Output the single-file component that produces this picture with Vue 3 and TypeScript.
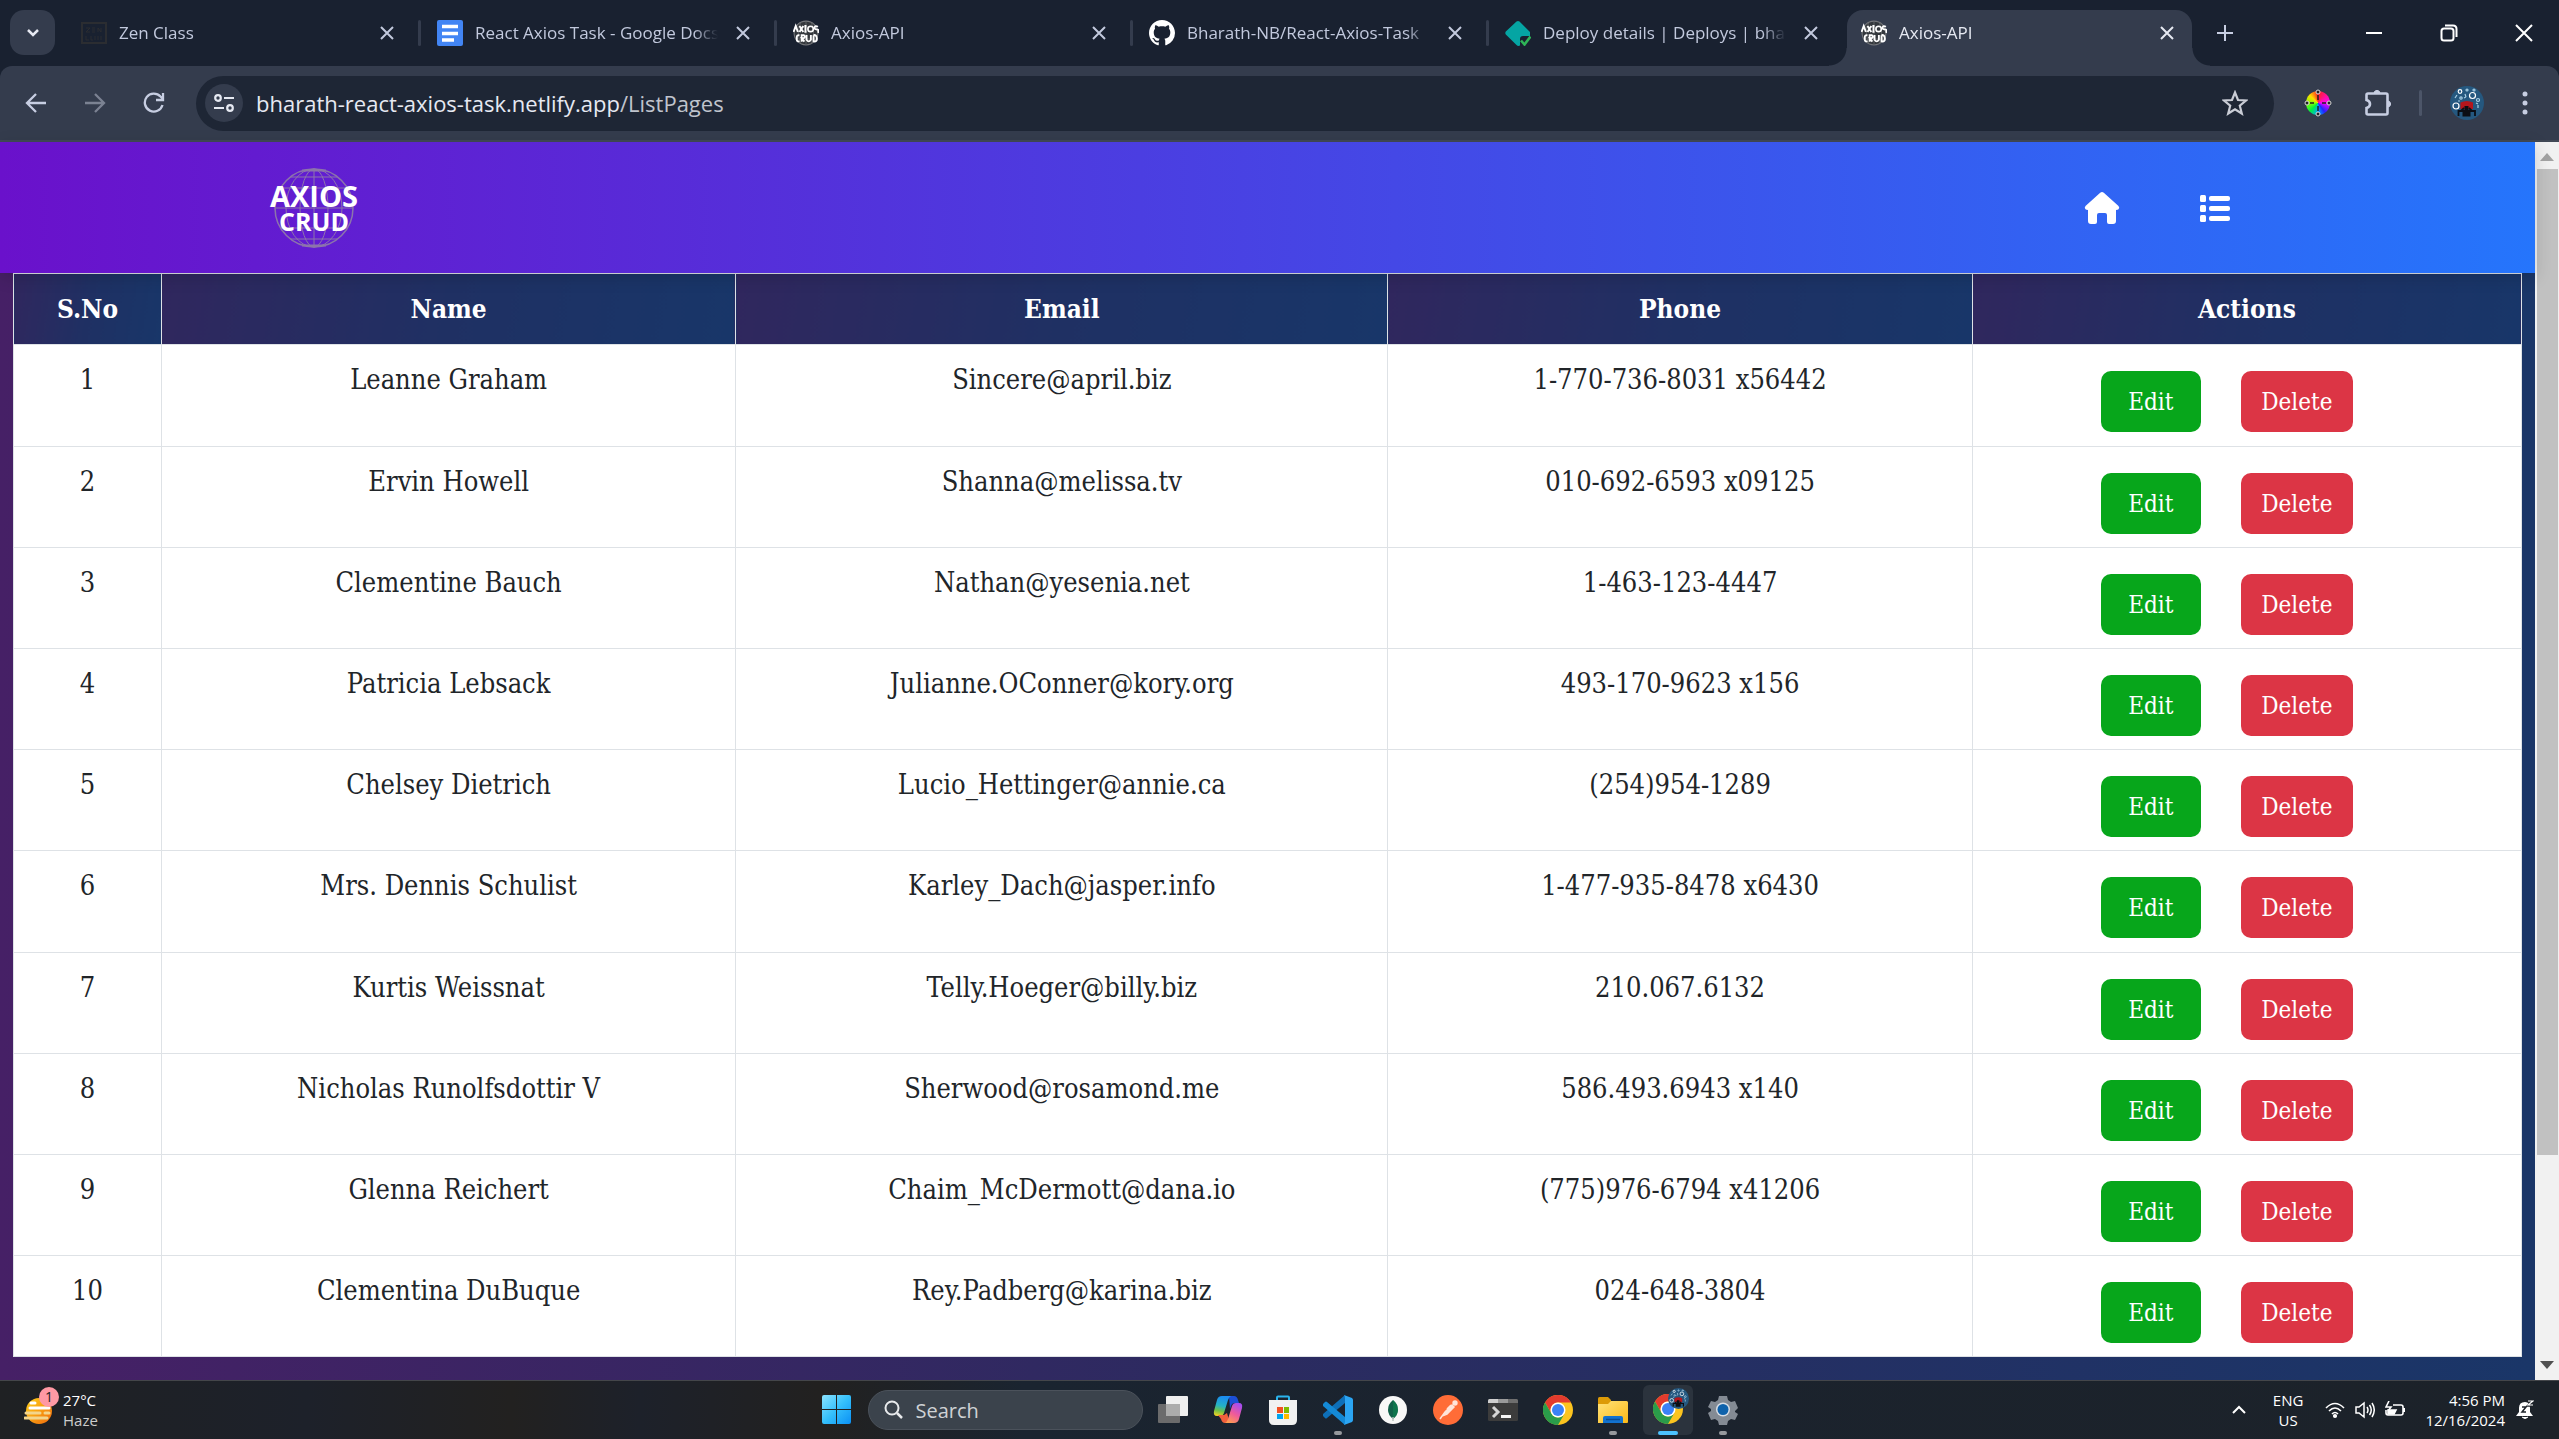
<script setup lang="ts">
interface Tab {
  title: string
  icon: string
  active?: boolean
}
interface User {
  id: number
  name: string
  email: string
  phone: string
}
interface TaskApp {
  label: string
  icon: string
  state?: 'running' | 'focused'
}

const tabs: Tab[] = [
  { title: 'Zen Class', icon: 'zen' },
  { title: 'React Axios Task - Google Docs', icon: 'docs' },
  { title: 'Axios-API', icon: 'axios' },
  { title: 'Bharath-NB/React-Axios-Task', icon: 'github' },
  { title: 'Deploy details | Deploys | bharath', icon: 'deploy' },
  { title: 'Axios-API', icon: 'axios', active: true },
]

const users: User[] = [
  { id: 1, name: 'Leanne Graham', email: 'Sincere@april.biz', phone: '1-770-736-8031 x56442' },
  { id: 2, name: 'Ervin Howell', email: 'Shanna@melissa.tv', phone: '010-692-6593 x09125' },
  { id: 3, name: 'Clementine Bauch', email: 'Nathan@yesenia.net', phone: '1-463-123-4447' },
  { id: 4, name: 'Patricia Lebsack', email: 'Julianne.OConner@kory.org', phone: '493-170-9623 x156' },
  { id: 5, name: 'Chelsey Dietrich', email: 'Lucio_Hettinger@annie.ca', phone: '(254)954-1289' },
  { id: 6, name: 'Mrs. Dennis Schulist', email: 'Karley_Dach@jasper.info', phone: '1-477-935-8478 x6430' },
  { id: 7, name: 'Kurtis Weissnat', email: 'Telly.Hoeger@billy.biz', phone: '210.067.6132' },
  { id: 8, name: 'Nicholas Runolfsdottir V', email: 'Sherwood@rosamond.me', phone: '586.493.6943 x140' },
  { id: 9, name: 'Glenna Reichert', email: 'Chaim_McDermott@dana.io', phone: '(775)976-6794 x41206' },
  { id: 10, name: 'Clementina DuBuque', email: 'Rey.Padberg@karina.biz', phone: '024-648-3804' },
]

const apps: TaskApp[] = [
  { label: 'Task View', icon: 'taskview' },
  { label: 'Copilot', icon: 'copilot' },
  { label: 'Microsoft Store', icon: 'store' },
  { label: 'Visual Studio Code', icon: 'vscode', state: 'running' },
  { label: 'MongoDB Compass', icon: 'mongo' },
  { label: 'Postman', icon: 'postman' },
  { label: 'Terminal', icon: 'terminal' },
  { label: 'Google Chrome', icon: 'chrome' },
  { label: 'File Explorer', icon: 'explorer', state: 'running' },
  { label: 'Google Chrome, profile', icon: 'chrome-profile', state: 'focused' },
  { label: 'Settings', icon: 'settings', state: 'running' },
]
</script>

<template>
  <div class="screen">
    <svg class="defs" aria-hidden="true">
      <defs>
        <linearGradient id="g-win" x1="0" y1="0" x2="1" y2="1">
          <stop offset="0" stop-color="#8be3ff" /><stop offset="0.5" stop-color="#35c0fb" /><stop offset="1" stop-color="#0a90f5" />
        </linearGradient>
        <linearGradient id="g-cop1" x1="0.3" y1="0" x2="0.1" y2="1">
          <stop offset="0" stop-color="#1b8df0" /><stop offset="0.45" stop-color="#25b3c4" /><stop offset="0.7" stop-color="#6cc04a" /><stop offset="1" stop-color="#ffd21f" />
        </linearGradient>
        <linearGradient id="g-cop2" x1="0.7" y1="0" x2="0.2" y2="1">
          <stop offset="0" stop-color="#a54df0" /><stop offset="0.5" stop-color="#ef5a9b" /><stop offset="1" stop-color="#ffa04d" />
        </linearGradient>
        <linearGradient id="g-sun" x1="0" y1="0" x2="1" y2="1">
          <stop offset="0" stop-color="#ffd21a" /><stop offset="1" stop-color="#f0690c" />
        </linearGradient>
        <linearGradient id="g-folder" x1="0" y1="0" x2="1" y2="1">
          <stop offset="0" stop-color="#ffe27a" /><stop offset="1" stop-color="#fbb917" />
        </linearGradient>
        <symbol id="zen" viewBox="0 0 26 26">
          <rect x="1" y="3" width="24" height="20" fill="none" stroke="#2b2d31" stroke-width="2" />
          <path d="M5 8h4l-4 4h4M11 8h3M11 10h3M11 12h3M17 12v-4l3 4v-4M5 16v4h3M10 16v4h2M14 16v4M17 16v4M20 16v4" fill="none" stroke="#2b2d31" />
        </symbol>
        <symbol id="docs" viewBox="0 0 26 26">
          <rect width="26" height="26" rx="2" fill="#4285f4" />
          <path d="M5 6.500h16M5 13.500h16M5 20h12" stroke="#fff" stroke-width="3.400" />
        </symbol>
        <symbol id="axios" viewBox="0 0 96 96">
          <circle cx="48" cy="48" r="44" fill="#33373c" stroke="#74767a" stroke-width="4" />
          <path d="M48 4v88M10 26h76M10 70h76M28 10q-16 38 0 76M68 10q16 38 0 76" stroke="#64676b" stroke-width="3" fill="none" />
          <path d="M2 44L10 22l8 22M24 22l14 22M38 22L24 44M46 22v22M42 22h8M42 44h8M92 25q-10-6-12 2t8 8 4 12M24 57q-10-3-10 7v8q0 9 10 6M32 80V56h8q6 6 0 11h-8l10 13M50 55v18q8 12 16 0V55M76 56v23q14 2 12-12t-12-11" stroke="#fff" stroke-width="7" fill="none" />
          <circle cx="65" cy="33" r="10" stroke="#fff" stroke-width="6" fill="none" />
        </symbol>
        <symbol id="github" viewBox="0 0 16 16">
          <path fill="#fff" d="M8 0C3.580 0 0 3.580 0 8c0 3.540 2.290 6.530 5.470 7.590.4.070.55-.17.55-.38 0-.19-.01-.82-.01-1.490-2.010.37-2.530-.49-2.690-.94-.09-.23-.48-.94-.82-1.130-.28-.15-.68-.52-.01-.53.63-.01 1.080.58 1.230.82.72 1.210 1.870.87 2.330.66.07-.52.28-.87.51-1.070-1.780-.2-3.640-.89-3.640-3.950 0-.87.31-1.590.82-2.150-.08-.2-.36-1.020.08-2.120 0 0 .67-.21 2.200.82.64-.18 1.320-.27 2-.27s1.360.09 2 .27c1.530-1.040 2.200-.82 2.200-.82.44 1.100.16 1.920.08 2.120.51.56.82 1.270.82 2.150 0 3.070-1.870 3.750-3.650 3.950.29.25.54.73.54 1.480 0 1.070-.01 1.930-.01 2.200 0 .21.15.46.55.38A8.010 8.010 0 0 0 16 8c0-4.420-3.580-8-8-8z" />
        </symbol>
        <symbol id="deploy" viewBox="0 0 26 26">
          <path d="M11.500 1.500q1.500-1 3 0L25 12v4h-7q-3 0-3 3v6.500q-2 1-3.500-.5L.8 14.500q-1-1.500 0-3z" fill="#05a5a3" />
          <path d="M16 20.500l3.500 4 6-8" fill="none" stroke="#2fb457" stroke-width="2.600" />
        </symbol>
        <symbol id="avatar" viewBox="0 0 34 34">
          <circle cx="17" cy="17" r="17" fill="#25587f" />
          <g fill="none" stroke="#a9d0e6" stroke-width="1.200">
            <circle cx="10" cy="5.500" r="1.800" stroke="#fff" /><circle cx="22.500" cy="9.500" r="3" stroke="#fff" /><circle cx="6" cy="20" r="3" stroke="#fff" /><circle cx="17" cy="4" r="1" /><circle cx="28" cy="14" r="1.500" /><circle cx="11" cy="12" r="1.200" /><circle cx="24" cy="4" r="1" /><path d="M5 12l2-3M15 8l1 3M28 22v-3M14 12l2-1M26 17l2 1M8 15h2" />
          </g>
          <path d="M10.500 16.500q6.500-3 12.500 0v6.500H10.500z" fill="#b3161d" />
          <path d="M14.500 20h4v4l2 1.500v5h-8v-5l2-1.500z" fill="#0b0e14" />
          <path d="M8.500 30v-5H25v5M11 25l3-3M22 25l-3-3" fill="none" stroke="#0b0e14" stroke-width="1.800" />
        </symbol>
        <symbol id="taskview" viewBox="0 0 30 30">
          <rect x="8" y="1" width="22" height="20" rx="1" fill="#efefef" />
          <rect x="0" y="9" width="22" height="19" rx="1" fill="#6b6b6c" />
          <rect x="8" y="9" width="14" height="12" fill="#acacac" />
        </symbol>
        <symbol id="copilot" viewBox="0 0 30 30">
          <path d="M16 1h5q3 0 4 4l1 3h-4q-3 0-4 3l-1 3z" fill="#1c4fd6" />
          <path d="M9 1h9q-2 1-3 4l-4 13q-1 3-4 3H4q-4 0-3-5L4 5q1-4 5-4z" fill="url(#g-cop1)" />
          <path d="M5 20h6l3-2 2 7q0 3-2 3h-2q-3 0-4-4z" fill="#f0603c" />
          <path d="M21 28h-9q2-1 3-4l4-13q1-3 4-3h3q4 0 3 5l-3 11q-1 4-5 4z" fill="url(#g-cop2)" />
        </symbol>
        <symbol id="store" viewBox="0 0 30 30">
          <path d="M9 6V2.500q0-1 1-1h10q1 0 1 1V6" fill="none" stroke="#2ab4ee" stroke-width="2" />
          <path d="M1 5h28v20q0 5-5 5H6q-5 0-5-5z" fill="#f1f1f1" />
          <path d="M9 12h6v6H9z" fill="#f25022" /><path d="M16 12h5v6h-5z" fill="#7fba00" /><path d="M9 19h6v5H9z" fill="#00a4ef" /><path d="M16 19h5v5h-5z" fill="#ffb900" />
        </symbol>
        <symbol id="vscode" viewBox="0 0 30 30">
          <path d="M22 0v8L4 23q-1 1-2 0l-2-2q-1-1 0-2z" fill="#0e6fb8" />
          <path d="M22 30v-8L4 7Q3 6 2 7L0 9q-1 1 0 2z" fill="#1489d6" />
          <path d="M21 0l8 3q1 1 1 2v20q0 1-1 2l-8 3q1-1 1-3V3q0-2-1-3z" fill="#2ba5f3" />
        </symbol>
        <symbol id="mongo" viewBox="0 0 30 30">
          <circle cx="15" cy="15" r="14" fill="#f8f8f7" />
          <path d="M15 5q5 4 5 10 0 5-5 9-5-4-5-9 0-6 5-10z" fill="#116149" /><path d="M15 5q5 4 5 10 0 5-5 9z" fill="#0b8a4f" opacity="0.500" /><path d="M15 22v4" stroke="#b8c4be" stroke-width="1.500" />
        </symbol>
        <symbol id="postman" viewBox="0 0 30 30">
          <circle cx="15" cy="15" r="15" fill="#ff6c37" />
          <path d="M7 24l5-7 7-7 2 2-7 7-5 2zM14 14l4-4" fill="#ffe3d8" stroke="#ffe3d8" stroke-width="1.500" /><circle cx="22" cy="8" r="2.700" fill="#ffe3d8" />
        </symbol>
        <symbol id="terminal" viewBox="0 0 30 30">
          <rect y="4" width="30" height="22" rx="1.500" fill="#3c3c3c" /><path d="M0 8V5.500Q0 4 1.500 4H10v4z" fill="#cfcfcf" /><path d="M10 4h10v4H10z" fill="#9a9a9a" /><path d="M20 4h8.500Q30 4 30 5.500V8H20z" fill="#6e6e6e" />
          <path d="M5 12l5 5-5 5" fill="none" stroke="#d5d5d5" stroke-width="3" /><path d="M13 21.500h10" stroke="#f4f4f4" stroke-width="3" />
        </symbol>
        <symbol id="chrome" viewBox="0 0 30 30">
          <circle cx="15" cy="15" r="15" fill="#fcc41f" />
          <path d="M2 7.500A15 15 0 0 1 28 7.500H15a7.500 7.500 0 0 0-6.500 11.200z" fill="#e33b2e" />
          <path d="M2 7.500A15 15 0 0 0 15 30l6.500-11.300a7.500 7.500 0 0 1-13 0z" fill="#2a9c4a" />
          <circle cx="15" cy="15" r="7.500" fill="#fff" /><circle cx="15" cy="15" r="6" fill="#3b82f6" />
        </symbol>
        <symbol id="explorer" viewBox="0 0 30 30">
          <path d="M0 3.500Q0 2 1.500 2H10l3 3v5H0z" fill="#dc9a07" /><path d="M0 9h10l3-3h15.500Q30 6 30 7.500V27q0 1-1 1H0z" fill="url(#g-folder)" />
          <path d="M5 28v-5q0-2 2-2h16q2 0 2 2v5z" fill="#1272cf" /><path d="M8 24.500h14" stroke="#0b4c93" stroke-width="1.500" />
        </symbol>
        <symbol id="chrome-profile" viewBox="0 0 38 38">
          <use href="#chrome" x="2" y="6" width="30" height="30" /><use href="#avatar" x="17" y="0" width="21" height="21" />
        </symbol>
        <symbol id="settings" viewBox="0 0 30 30">
          <path d="M11 1h8l1 4 3 2 4-1 3 7-3 3v1l3 2-3 6-4-1-3 2-1 4h-8l-1-4-3-2-4 1-3-7 3-2v-2l-3-2L3 6l4 1 3-2z" fill="#848b94" />
          <circle cx="15" cy="14.500" r="7" fill="#d8dee6" /><circle cx="15" cy="14.500" r="5.500" fill="#0f62ab" />
        </symbol>
      </defs>
    </svg>

    <header class="tabstrip">
      <button class="tabsearch" type="button" aria-label="Search tabs">
        <svg width="16" height="16" viewBox="0 0 16 16"><path d="M3 5l5 5 5-5" fill="none" stroke="#e6e9f2" stroke-width="2.500" /></svg>
      </button>
      <div class="tabs" role="tablist">
        <div v-for="(tab, i) in tabs" :key="i" class="tab" :class="{ active: tab.active }" role="tab">
          <svg class="favicon"><use :href="'#' + tab.icon" /></svg>
          <span class="title">{{ tab.title }}</span>
          <button class="close" type="button" aria-label="Close tab">
            <svg width="14" height="14" viewBox="0 0 14 14"><path d="M1 1l12 12M13 1L1 13" stroke="currentColor" stroke-width="2" /></svg>
          </button>
        </div>
      </div>
      <button class="newtab" type="button" aria-label="New tab">
        <svg width="18" height="18" viewBox="0 0 18 18"><path d="M9 1v16M1 9h16" stroke="#c7cee2" stroke-width="2" /></svg>
      </button>
      <div class="winbtns">
        <button type="button" aria-label="Minimize"><svg width="18" height="18" viewBox="0 0 18 18"><path d="M1 9h16" stroke="#fff" stroke-width="2" /></svg></button>
        <button type="button" aria-label="Restore"><svg width="18" height="18" viewBox="0 0 18 18"><rect x="1.500" y="4.500" width="12" height="12" rx="2.500" fill="none" stroke="#fff" stroke-width="2" /><path d="M5 1.500h8q3.500 0 3.500 3.500v8" fill="none" stroke="#fff" stroke-width="2" /></svg></button>
        <button type="button" aria-label="Close"><svg width="18" height="18" viewBox="0 0 18 18"><path d="M1 1l16 16M17 1L1 17" stroke="#fff" stroke-width="2" /></svg></button>
      </div>
    </header>

    <div class="toolbar">
      <div class="history">
        <button type="button" aria-label="Back"><svg width="22" height="22" viewBox="0 0 22 22"><path d="M21 11H2M11 2l-9 9 9 9" fill="none" stroke="#c7cee2" stroke-width="2.300" /></svg></button>
        <button type="button" aria-label="Forward"><svg width="22" height="22" viewBox="0 0 22 22"><path d="M1 11h19M11 2l9 9-9 9" fill="none" stroke="#7b8292" stroke-width="2.300" /></svg></button>
        <button type="button" aria-label="Reload"><svg width="22" height="22" viewBox="0 0 22 22"><path d="M19.500 13a9 9 0 1 1-2-8.500L20 7M20 1v7h-7" fill="none" stroke="#c7cee2" stroke-width="2.300" /></svg></button>
      </div>
      <div class="omnibox">
        <button class="siteinfo" type="button" aria-label="Site information">
          <svg width="20" height="20" viewBox="0 0 20 20" fill="none" stroke="#e6e9f2" stroke-width="2.200"><circle cx="4" cy="5" r="2.800" /><path d="M10 5h10M0 15h10" /><circle cx="16" cy="15" r="2.800" /></svg>
        </button>
        <div class="url">bharath-react-axios-task.netlify.app<span>/ListPages</span></div>
        <button class="star" type="button" aria-label="Bookmark this tab">
          <svg width="26" height="26" viewBox="0 0 26 26"><path d="M13 2.500l3 7.500 8 .5-6.200 5.200 2 7.800-6.800-4.300-6.800 4.300 2-7.800L2 10.500l8-.5z" fill="none" stroke="#cacdd6" stroke-width="2.200" /></svg>
        </button>
      </div>
      <div class="extensions">
        <button class="wheel" type="button" aria-label="Color picker">
          <i></i>
          <svg width="28" height="28" viewBox="0 0 28 28" fill="#222" stroke="#d8d8d8"><circle cx="14" cy="3" r="2" /><circle cx="14" cy="25" r="2" /><circle cx="3" cy="14" r="2" /><circle cx="25" cy="14" r="2" /><path d="M14 6v5M14 17v5M6 14h4M18 14h4" stroke="#222" stroke-width="1.500" /></svg>
        </button>
        <button class="puzzle" type="button" aria-label="Extensions">
          <svg width="28" height="28" viewBox="0 0 28 28"><path d="M10 3.500a3.200 3.200 0 0 1 6 0z" fill="#c7cee2" stroke="#c7cee2" /><path d="M24.500 12a3.200 3.200 0 0 1 0 6z" fill="#c7cee2" stroke="#c7cee2" /><path d="M4 4.500h18q1.500 0 1.500 1.500v18q0 1.500-1.500 1.500H4q-1.500 0-1.500-1.500v-5q3.500-1 3.500-4t-3.500-4V6q0-1.500 1.500-1.500z" fill="none" stroke="#c7cee2" stroke-width="2.600" /></svg>
        </button>
        <span class="rule"></span>
        <button class="profile" type="button" aria-label="Profile"><svg width="34" height="34"><use href="#avatar" /></svg></button>
        <button class="menu" type="button" aria-label="Menu">
          <svg width="6" height="26" viewBox="0 0 6 26" fill="#c7cee2"><circle cx="3" cy="4" r="2.500" /><circle cx="3" cy="13" r="2.500" /><circle cx="3" cy="22" r="2.500" /></svg>
        </button>
      </div>
    </div>

    <div class="viewport">
      <main class="page">
        <nav class="navbar">
          <a class="brand" href="#" aria-label="Axios CRUD">
            <svg width="96" height="84" viewBox="0 0 96 84">
              <g fill="none" stroke="#a3a397" stroke-width="1" opacity="0.650">
                <circle cx="47" cy="42" r="39" stroke-width="1.500" />
                <ellipse cx="47" cy="42" rx="28" ry="39" /><ellipse cx="47" cy="42" rx="14" ry="39" /><path d="M47 3v78M8 42h78M14 22h66M14 62h66M24 11h46M24 73h46" />
                <path d="M35 4.500h24M35 79.500h24" stroke-width="2" />
              </g>
              <text x="47" y="41" font-size="29">AXIOS</text>
              <text x="47" y="65" font-size="25">CRUD</text>
            </svg>
          </a>
          <div class="navlinks">
            <a href="#" aria-label="Home">
              <svg width="36" height="34" viewBox="0 0 36 34"><path d="M16.200 1.700q1.800-1.500 3.600 0L34.500 15q1.500 2 0 3.200-.7.800-2.500.8V30q0 3-3 3h-4q-2 0-2-2v-7q0-2-2-2h-6q-2 0-2 2v7q0 2-2 2H7q-3 0-3-3V19q-1.800 0-2.500-.8-1.500-1.200 0-3.200z" fill="#fff" /></svg>
            </a>
            <a href="#" aria-label="List">
              <svg width="32" height="28" viewBox="0 0 32 28" fill="#fff"><rect x="1" y="1" width="6" height="7" rx="1.500" /><rect x="1" y="11" width="6" height="7" rx="1.500" /><rect x="1" y="21" width="6" height="7" rx="1.500" /><rect x="10" y="2" width="21" height="5" rx="2" /><rect x="10" y="12" width="21" height="5" rx="2" /><rect x="10" y="22" width="21" height="5" rx="2" /></svg>
            </a>
          </div>
        </nav>
        <div class="listing">
          <table>
            <colgroup>
              <col class="c-no" /><col class="c-name" /><col class="c-email" /><col class="c-phone" /><col />
            </colgroup>
            <thead>
              <tr><th>S.No</th><th>Name</th><th>Email</th><th>Phone</th><th>Actions</th></tr>
            </thead>
            <tbody>
              <tr v-for="user in users" :key="user.id">
                <td>{{ user.id }}</td>
                <td>{{ user.name }}</td>
                <td>{{ user.email }}</td>
                <td>{{ user.phone }}</td>
                <td>
                  <div class="actions">
                    <button class="edit" type="button">Edit</button>
                    <button class="delete" type="button">Delete</button>
                  </div>
                </td>
              </tr>
            </tbody>
          </table>
        </div>
      </main>
      <div class="scrollbar" aria-hidden="true">
        <svg width="14" height="8" viewBox="0 0 14 8"><path d="M0 8l7-8 7 8z" fill="#a3a3a3" /></svg>
        <div class="thumb"></div>
        <svg width="14" height="8" viewBox="0 0 14 8"><path d="M0 0l7 8 7-8z" fill="#505050" /></svg>
      </div>
    </div>

    <footer class="taskbar">
      <div class="weather">
        <div class="sky">
          <svg width="32" height="28" viewBox="0 0 32 28"><circle cx="15" cy="15" r="13" fill="url(#g-sun)" /><path d="M7 7h4M6 12h19" stroke="#fff" stroke-width="3" stroke-linecap="round" /><path d="M2 17h14M21 17h4M1 22h22" stroke="#f3d58c" stroke-width="3" stroke-linecap="round" /></svg>
          <span class="badge">1</span>
        </div>
        <div class="lines"><span>27°C</span><span class="dim">Haze</span></div>
      </div>
      <div class="dock">
        <button class="start" type="button" aria-label="Start">
          <svg width="30" height="30" viewBox="0 0 30 30"><path d="M0 2q0-2 2-2h12v14H0zM15 0h12q2 0 2 2v12H15zM0 15h14v14H2q-2 0-2-2zM15 15h14v12q0 2-2 2H15z" fill="url(#g-win)" /></svg>
        </button>
        <label class="search">
          <svg width="20" height="20" viewBox="0 0 20 20"><circle cx="8" cy="8" r="6.500" fill="none" stroke="#e8eaec" stroke-width="2" /><path d="M13 13l5 5" stroke="#e8eaec" stroke-width="2.500" /></svg>
          <input type="text" placeholder="Search" aria-label="Search" />
        </label>
        <button v-for="app in apps" :key="app.label" class="app" :class="app.state" type="button" :aria-label="app.label">
          <svg :class="{ wide: app.icon === 'chrome-profile' }"><use :href="'#' + app.icon" /></svg>
        </button>
      </div>
      <div class="tray">
        <svg class="chevron" width="14" height="10" viewBox="0 0 14 10"><path d="M1 8l6-6 6 6" fill="none" stroke="#fff" stroke-width="2" /></svg>
        <div class="lines lang"><span>ENG</span><span>US</span></div>
        <div class="status">
          <svg width="20" height="18" viewBox="0 0 20 18" fill="none" stroke="#fff" stroke-width="1.600"><path d="M1 7q9-9 18 0M4 10q6-6 12 0M7 13q3-3 6 0" /><circle cx="10" cy="15" r="1.300" fill="#fff" /></svg>
          <svg width="20" height="18" viewBox="0 0 20 18" fill="none" stroke="#fff" stroke-width="1.500"><path d="M1 6h3l5-4v14l-5-4H1zM12 6q2 3 0 6M14.500 4q3.500 5 0 10M17 2q4.500 7 0 14" /></svg>
          <svg width="20" height="18" viewBox="0 0 20 18" fill="none" stroke="#fff" stroke-width="1.600"><path d="M8 4h8q2 0 2 2v6q0 2-2 2H3q-2 0-2-2V9" /><path d="M3 9h8l-2 4H3z" fill="#fff" /><path d="M4 0L1 6h5L3 10" /><path d="M19 7v4" stroke-width="2" /></svg>
        </div>
        <div class="lines clock"><span>4:56 PM</span><span>12/16/2024</span></div>
        <svg class="bell" width="18" height="20" viewBox="0 0 18 20"><path d="M3 8q0-6 6-6 5 0 5 6v4l3 4H0l3-4z" fill="#fff" /><path d="M6 17q3 3 6 0" fill="#fff" stroke="#fff" /><path d="M6 7h4l-4 5h4M11 1h5l-5 5h5" fill="none" stroke="#1c2229" stroke-width="1.500" /><path d="M12 1h5l-5 4h5" fill="none" stroke="#fff" stroke-width="1.200" /></svg>
      </div>
    </footer>
  </div>
</template>

<style>
body {
  margin: 0;
  overflow: hidden;
}
</style>

<style scoped>
.screen {
  display: flex;
  flex-direction: column;
  min-height: 100vh;
  font-family: "Open Sans", "Noto Sans", sans-serif;
  box-sizing: border-box;
  background: #192130;
}
.screen *,
.screen *::before,
.screen *::after {
  box-sizing: border-box;
}
.defs {
  position: absolute;
  width: 0;
  height: 0;
}
button {
  display: flex;
  align-items: center;
  justify-content: center;
  padding: 0;
  border: 0;
  background: none;
  color: inherit;
  font: inherit;
}
svg {
  display: block;
  flex: none;
}

.tabstrip {
  display: flex;
  align-items: flex-end;
  height: 66px;
  padding-left: 10px;
}
.tabsearch {
  width: 45px;
  height: 45px;
  margin: 0 8px 11px 0;
  border-radius: 14px;
  background: #343c4d;
}
.tabs {
  display: flex;
  align-items: flex-end;
  min-width: 0;
}
.tab {
  position: relative;
  display: flex;
  align-items: center;
  width: 356px;
  height: 56px;
  padding: 0 19px 10px 18px;
  color: #c2c9dd;
}
.tab:not(.active)::after {
  content: "";
  position: absolute;
  right: -2px;
  top: 10px;
  width: 3px;
  height: 26px;
  border-radius: 2px;
  background: #343c4d;
}
.tab:nth-last-child(2)::after {
  display: none;
}
.tab.active {
  width: 345px;
  margin: 0 5px 0 4px;
  padding: 0 12px 10px 14px;
  border-radius: 16px 16px 0 0;
  background: #343c4d;
  color: #e6e9f2;
}
.tab.active::before,
.tab.active::after {
  content: "";
  position: absolute;
  bottom: 0;
  width: 18px;
  height: 18px;
}
.tab.active::before {
  left: -18px;
  background: radial-gradient(circle at 0 0, transparent 17px, #343c4d 18px);
}
.tab.active::after {
  right: -18px;
  background: radial-gradient(circle at 100% 0, transparent 17px, #343c4d 18px);
}
.favicon {
  width: 26px;
  height: 26px;
  margin-right: 12px;
}
.title {
  flex: 1;
  overflow: hidden;
  font-size: 17px;
  line-height: 24px;
  white-space: nowrap;
  mask-image: linear-gradient(to right, #000 calc(100% - 24px), transparent);
}
.close {
  width: 26px;
  height: 26px;
  margin-left: 12px;
}
.newtab {
  width: 45px;
  height: 45px;
  margin: 0 0 11px 5px;
}
.winbtns {
  display: flex;
  gap: 5px;
  margin-left: auto;
  height: 66px;
}
.winbtns button {
  width: 70px;
}

.toolbar {
  display: flex;
  align-items: center;
  height: 76px;
  border-bottom: 2px solid #414956;
  border-radius: 12px 12px 0 0;
  background: #343c4d;
}
.history {
  display: flex;
  gap: 14px;
  padding-left: 13px;
}
.history button {
  width: 45px;
  height: 45px;
}
.omnibox {
  display: flex;
  flex: 1;
  align-items: center;
  height: 55px;
  margin-left: 20px;
  padding: 0 18px 0 9px;
  border-radius: 28px;
  background: #1e2635;
}
.siteinfo {
  width: 38px;
  height: 38px;
  border-radius: 50%;
  background: #343c4d;
}
.url {
  flex: 1;
  margin-left: 13px;
  color: #e6e9f2;
  font-size: 22px;
  line-height: 30px;
}
.url span {
  color: #c0c4cd;
}
.star {
  width: 42px;
  height: 42px;
}
.extensions {
  display: flex;
  align-items: center;
  padding: 0 12px 0 22px;
}
.extensions button {
  width: 44px;
  height: 44px;
}
.wheel {
  display: grid;
  place-items: center;
  place-content: center;
}
.wheel i,
.wheel svg {
  grid-area: 1 / 1;
}
.wheel i {
  width: 24px;
  height: 24px;
  border-radius: 50%;
  background: conic-gradient(#f22, #f0f 25%, #22f 40%, #0af 50%, #0e4 62%, #8f0 75%, #fd0 87%, #f22);
}
.extensions .puzzle {
  margin-left: 16px;
}
.rule {
  width: 3px;
  height: 26px;
  margin: 0 23px 0 19px;
  border-radius: 2px;
  background: #4c5568;
}
.extensions .profile {
  margin-right: 14px;
}

.viewport {
  display: flex;
  flex: 1;
}
.page {
  flex: 1;
  background: linear-gradient(to right, #462066, #2b2b60 50%, #1a3668);
}
.navbar {
  position: relative;
  display: flex;
  align-items: center;
  justify-content: space-between;
  height: 131px;
  padding: 0 304px 0 267px;
  background: linear-gradient(to right, #6a11cb, #2575fc);
  box-shadow: 0 4px 16px rgba(0, 0, 0, 0.15);
}
.brand text {
  fill: #fff;
  font-family: "Open Sans", sans-serif;
  font-weight: 700;
  text-anchor: middle;
}
.navlinks {
  display: flex;
  align-items: center;
  gap: 79px;
}
.listing {
  padding: 0 13px 23px;
}
table {
  width: 100%;
  border-collapse: collapse;
  table-layout: fixed;
  font-family: "DejaVu Serif Condensed", "DejaVu Serif", serif;
  font-size: 27px;
  line-height: 42px;
  color: #212529;
  background: #fff;
}
.c-no { width: 5.9%; }
.c-name { width: 22.9%; }
.c-email { width: 26%; }
.c-phone { width: 23.3%; }
th,
td {
  padding: 14px 12px 0;
  border: 1px solid #dee2e6;
  text-align: center;
  vertical-align: top;
}
th {
  height: 71px;
  background: linear-gradient(100deg, #30275e, #1f3063 50%, #183669);
  color: #fff;
  font-size: 26px;
  font-weight: 700;
}
td {
  height: 101px;
}
tr:nth-child(5n + 1) td {
  height: 102px;
}
.actions {
  display: flex;
  justify-content: center;
  gap: 40px;
  padding: 12px 40px 0 0;
}
.actions button {
  height: 61px;
  border-radius: 10px;
  color: #fff;
  font-size: 24px;
}
.edit {
  width: 100px;
  background: #07a61b;
}
.delete {
  width: 112px;
  background: #dc3545;
}
.scrollbar {
  display: flex;
  flex-direction: column;
  align-items: center;
  width: 24px;
  padding: 11px 0;
  background: #f1f1f1;
}
.thumb {
  width: 21px;
  height: 986px;
  margin: 8px 0 auto;
  background: #c1c1c1;
}

.taskbar {
  display: grid;
  grid-template-columns: 1fr auto 1fr;
  align-items: center;
  height: 59px;
  border-top: 1px solid #44464a;
  background: linear-gradient(to right, #1f2123, #1d212a 12%, #222120 20%, #1d212a 25%, #222120 32%, #1a2430 40%, #1b232e 60%, #1c2229);
  color: #fff;
}
.weather {
  display: flex;
  align-items: center;
  gap: 7px;
  padding-left: 24px;
}
.sky {
  position: relative;
}
.badge {
  position: absolute;
  left: 15px;
  top: -9px;
  width: 20px;
  height: 20px;
  border-radius: 50%;
  background: #ff99a4;
  color: #222;
  font-size: 14px;
  line-height: 20px;
  text-align: center;
}
.lines {
  display: flex;
  flex-direction: column;
  font-size: 15px;
  line-height: 20px;
}
.dim {
  color: #ccc;
}
.dock {
  display: flex;
  align-items: center;
  height: 58px;
  padding-left: 10px;
}
.start {
  width: 30px;
  margin-right: 16px;
}
.search {
  display: flex;
  align-items: center;
  gap: 12px;
  width: 275px;
  height: 40px;
  padding: 0 15px;
  border: 1px solid #4b525b;
  border-radius: 20px;
  background: #3b434c;
}
.search input {
  width: 100%;
  min-width: 0;
  padding: 0;
  border: 0;
  background: none;
  color: #fff;
  font: 20px "Open Sans", sans-serif;
}
.search input::placeholder {
  color: #cfd2d5;
  opacity: 1;
}
.app {
  position: relative;
  width: 50px;
  height: 50px;
  margin-left: 5px;
  border-radius: 6px;
}
.app svg {
  width: 30px;
  height: 30px;
}
.app svg.wide {
  width: 38px;
  height: 38px;
  margin: -6px 0 0 4px;
}
.focused {
  background: #2b333d;
}
.running::after,
.focused::after {
  content: "";
  position: absolute;
  bottom: 0;
  width: 8px;
  height: 4px;
  border-radius: 2px;
  background: #96999d;
}
.focused::after {
  width: 20px;
  background: #4cc2ff;
}
.tray {
  display: flex;
  align-items: center;
  justify-content: flex-end;
  padding-right: 25px;
}
.lang {
  margin: 0 22px 0 27px;
  text-align: center;
}
.status {
  display: flex;
  gap: 10px;
  margin-right: 20px;
}
.clock {
  text-align: right;
}
.bell {
  margin-left: 11px;
}
</style>
